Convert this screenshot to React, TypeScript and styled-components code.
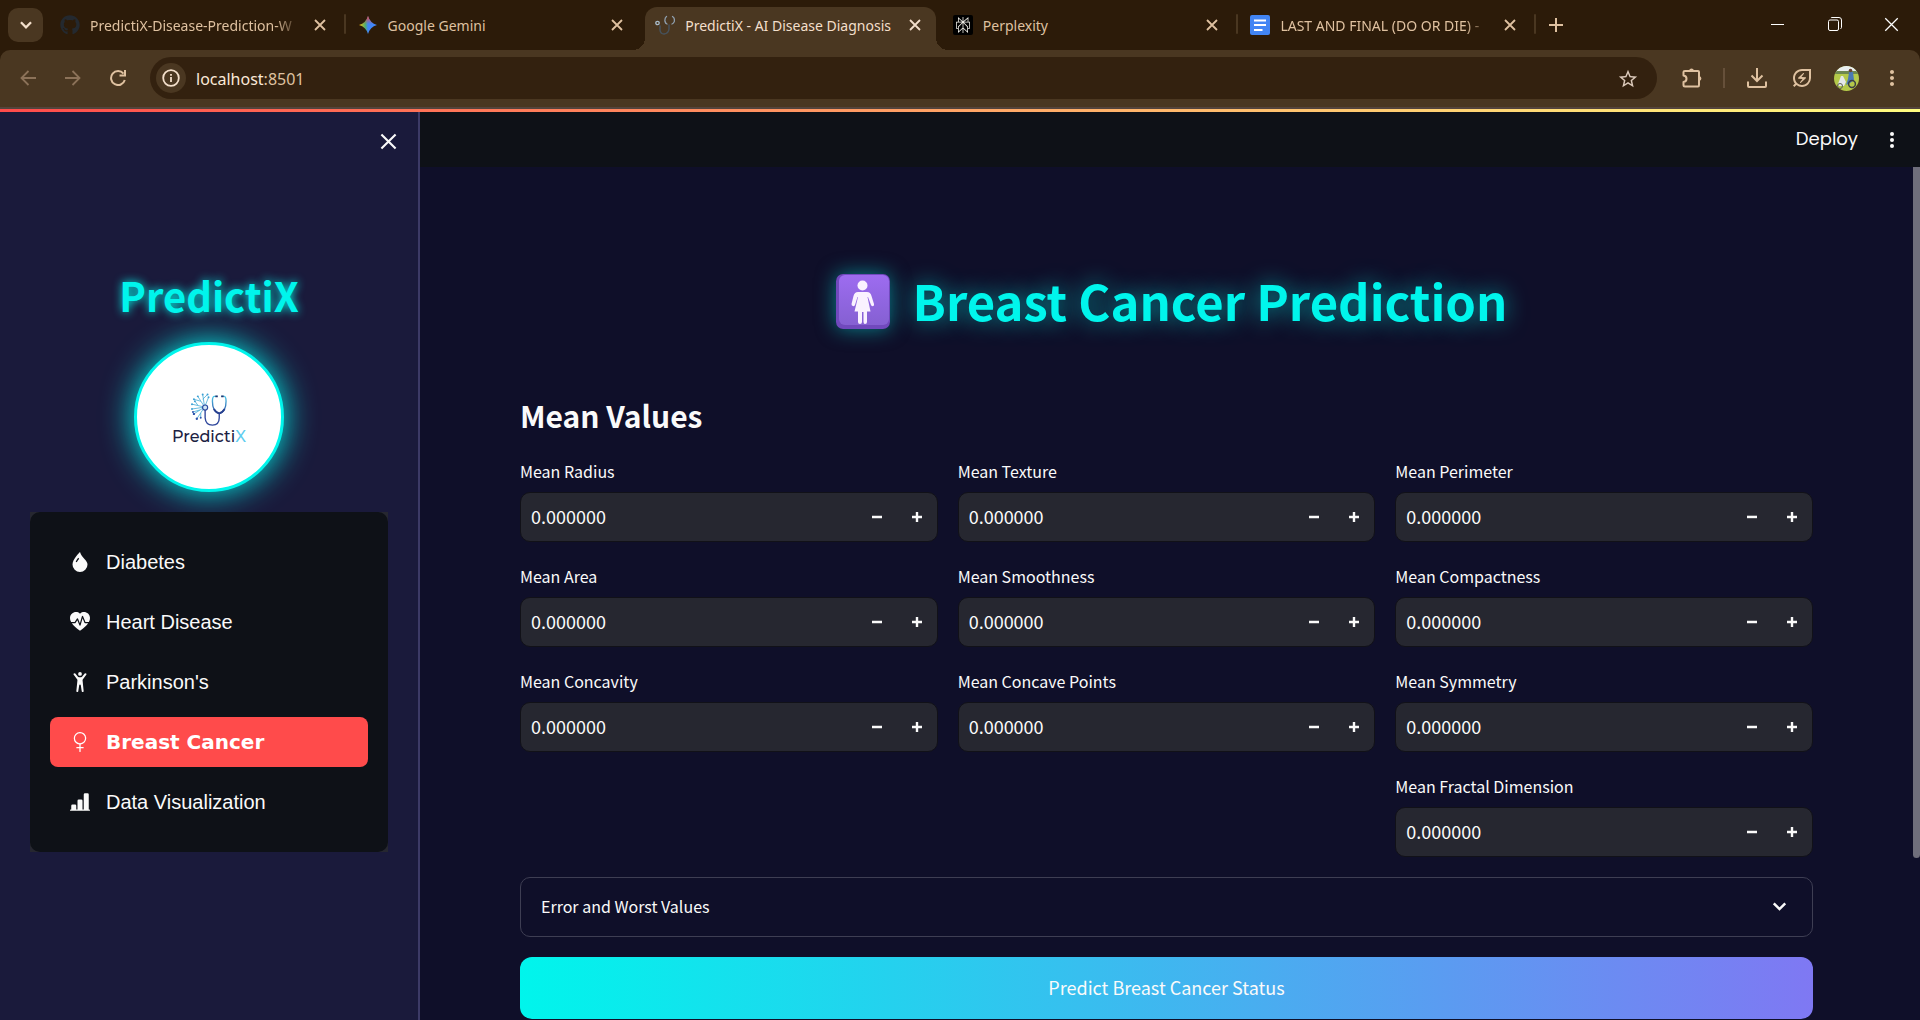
import React, { useState } from 'react';
import styled, { createGlobalStyle, css } from 'styled-components';
import {
  BsBarChartLineFill,
  BsDropletFill,
  BsGenderFemale,
  BsHeartPulseFill,
  BsPersonArmsUp,
} from 'react-icons/bs';
import { FaGithub } from 'react-icons/fa';
import { SiPerplexity } from 'react-icons/si';
import { MdMoreVert, MdOutlineEnergySavingsLeaf, MdStarOutline } from 'react-icons/md';

const sans = `"Noto Sans CJK SC", "Noto Sans", sans-serif`;
const chromeFont = `"Noto Sans", "Open Sans", sans-serif`;
const accent = '#00f5ec';

const GlobalStyle = createGlobalStyle`
  *, *::before, *::after { box-sizing: border-box; }
  body { margin: 0; background: #0f0f29; }
  h1, h2, p { margin: 0; }
  button, input { font: inherit; color: inherit; border: 0; background: none; padding: 0; margin: 0; }
  a { color: inherit; text-decoration: none; }
  svg { display: block; flex: none; }
`;

const Window = styled.div`
  height: 100vh;
  display: flex;
  flex-direction: column;
  overflow: hidden;
  color: #fafafa;
  font-family: ${sans};
`;

/* ---------- browser frame ---------- */

const TabStrip = styled.div`
  flex: none;
  height: 50px;
  display: flex;
  align-items: stretch;
  background: #2c1b09;
  color: #dfc1a0;
  font-family: ${chromeFont};
  font-size: 14px;
`;

const TabSearch = styled.button`
  flex: none;
  width: 35px;
  height: 34px;
  margin: 8px 7px 0 8px;
  border-radius: 10px;
  background: #4a3721;
  color: #f3dfcb;
  display: grid;
  place-items: center;
`;

const Tabs = styled.div`
  flex: 0 1 1488px;
  min-width: 0;
  display: flex;
`;

const Tab = styled.div<{ $active?: boolean; $divided?: boolean }>`
  position: relative;
  flex: 1 1 0;
  min-width: 0;
  display: flex;
  align-items: center;
  gap: 10px;
  height: 43px;
  margin-top: 7px;
  padding: 0 18px 7px 10px;
  ${(p) =>
    p.$divided &&
    css`
      &::after {
        content: '';
        position: absolute;
        right: 2px;
        top: 7px;
        width: 2px;
        height: 20px;
        border-radius: 1px;
        background: #4a3721;
      }
    `}
  ${(p) =>
    p.$active &&
    css`
      color: #f3dfcb;
      &::before {
        content: '';
        position: absolute;
        inset: 0 7px 0 0;
        border-radius: 12px 12px 0 0;
        background: #4a3721;
      }
    `}
`;

const TabFoot = styled.span<{ $side: 'left' | 'right' }>`
  position: absolute;
  bottom: 0;
  width: 12px;
  height: 12px;
  ${(p) => (p.$side === 'left' ? 'left: -12px;' : 'right: -5px;')}
  background: radial-gradient(
    circle at ${(p) => (p.$side === 'left' ? '0 0' : '100% 0')},
    transparent 12px,
    #4a3721 12px
  );
`;

const TabIcon = styled.span`
  position: relative;
  flex: none;
  width: 20px;
  height: 20px;
  display: grid;
  place-items: center;
`;

const TabTitle = styled.span<{ $fade?: boolean }>`
  position: relative;
  flex: 1;
  min-width: 0;
  padding-top: 1px;
  overflow: hidden;
  white-space: nowrap;
  line-height: 20px;
  ${(p) => p.$fade && 'mask-image: linear-gradient(90deg, #000 88%, transparent);'}
`;

const CloseButton = styled.button`
  position: relative;
  flex: none;
  width: 20px;
  height: 20px;
  display: grid;
  place-items: center;
`;

const NewTab = styled.button`
  width: 36px;
  display: grid;
  place-items: center;
`;

const WindowControls = styled.div`
  margin-left: auto;
  display: flex;
  color: #ffffff;
`;

const WindowButton = styled.button`
  width: 57px;
  height: 48px;
  display: grid;
  place-items: center;
`;

const ToolbarBack = styled.div`
  flex: none;
  background: #2c1b09;
`;

const Toolbar = styled.div`
  height: 59px;
  display: flex;
  align-items: center;
  padding: 0 6px 1px 5px;
  border-radius: 10px 10px 0 0;
  border-bottom: 2px solid #54443c;
  background: #4a3721;
  color: #dfc1a0;
`;

const ToolButton = styled.button<{ $dim?: boolean }>`
  flex: none;
  width: 45px;
  height: 42px;
  display: grid;
  place-items: center;
  color: ${(p) => (p.$dim ? '#8c7259' : '#dfc1a0')};
`;

const Omnibox = styled.div`
  flex: 1;
  height: 42px;
  margin: 0 12px 0 10px;
  padding: 0 20px 0 6px;
  display: flex;
  align-items: center;
  border-radius: 21px;
  background: #33210f;
`;

const SiteInfo = styled.button`
  width: 30px;
  height: 30px;
  border-radius: 15px;
  background: #4a3721;
  color: #f3dfcb;
  display: grid;
  place-items: center;
`;

const Address = styled.a`
  flex: 1;
  padding: 2px 0 0 10px;
  font-family: ${chromeFont};
  font-size: 16px;
  color: #dfc1a0;
`;

const Host = styled.span`
  color: #fbe9d8;
`;

const ToolDivider = styled.span`
  width: 2px;
  height: 20px;
  margin: 0 9px;
  background: #66503a;
`;

/* ---------- application ---------- */

const Rainbow = styled.div`
  flex: none;
  height: 3px;
  background: linear-gradient(90deg, #ff4b4b, #fffd80);
`;

const AppBody = styled.div`
  flex: 1;
  min-height: 0;
  display: flex;
`;

const Sidebar = styled.aside`
  flex: none;
  width: 420px;
  padding: 0 30px;
  border-right: 2px solid #3c3a66;
  background: #1a1a3b;
`;

const SidebarHeader = styled.div`
  height: 156px;
  padding-top: 14px;
  display: flex;
  justify-content: flex-end;
  align-items: flex-start;
`;

const CollapseButton = styled.button`
  width: 30px;
  height: 30px;
  margin-right: -15px;
  display: grid;
  place-items: center;
`;

const Brand = styled.h2`
  font-size: 40px;
  line-height: 54px;
  font-weight: 700;
  text-align: center;
  color: ${accent};
  text-shadow: 0 0 10px ${accent};
`;

const LogoDisc = styled.div`
  width: 150px;
  height: 150px;
  margin: 20px auto;
  padding-top: 6px;
  border: 3px solid ${accent};
  border-radius: 50%;
  background: #ffffff;
  box-shadow: 0 0 32px ${accent};
  display: flex;
  flex-direction: column;
  align-items: center;
  justify-content: center;
`;

const LogoText = styled.span`
  font-family: Montserrat, Inter, sans-serif;
  font-size: 16px;
  line-height: 20px;
  font-weight: 500;
  color: #1b2142;
`;

const LogoX = styled.span`
  color: #5fcdf0;
`;

const MenuFrame = styled.div`
  background: #262730;
`;

const Menu = styled.nav`
  display: flex;
  flex-direction: column;
  gap: 10px;
  padding: 25px 20px;
  border-radius: 10px;
  background: #0e1117;
`;

const MenuItem = styled.a<{ $active?: boolean }>`
  height: 50px;
  display: flex;
  align-items: center;
  gap: 16px;
  padding: 0 20px;
  border-radius: 8px;
  font-family: "Liberation Sans", Arial, sans-serif;
  font-size: 20px;
  color: #fafafa;
  ${(p) =>
    p.$active &&
    css`
      background: #ff4b4b;
      color: #ffffff;
      font-family: "Arial Black", "DejaVu Sans", sans-serif;
      font-weight: 700;
    `}
`;

const Main = styled.main`
  flex: 1;
  min-width: 0;
  display: flex;
  flex-direction: column;
  background: #0f0f29;
`;

const AppHeader = styled.header`
  flex: none;
  height: 55px;
  display: flex;
  justify-content: flex-end;
  align-items: center;
  gap: 21px;
  padding-right: 15px;
  background: #0e1117;
`;

const DeployButton = styled.button`
  padding-bottom: 2px;
  font-family: Poppins, Inter, sans-serif;
  font-size: 18px;
  line-height: 28px;
`;

const MenuDots = styled.button`
  width: 26px;
  display: grid;
  place-items: center;
`;

const Scroller = styled.div`
  flex: 1;
  min-height: 0;
  display: flex;
  overflow: hidden;
`;

const Content = styled.div`
  flex: 1;
  min-width: 0;
  padding: 100px 100px 0;
`;

const ScrollTrack = styled.div`
  flex: none;
  width: 7px;
`;

const ScrollThumb = styled.div`
  height: 81%;
  border-radius: 0 0 4px 4px;
  background: #6f6e7b;
`;

const Title = styled.h1`
  display: flex;
  justify-content: center;
  align-items: center;
  gap: 23px;
  padding-left: 10px;
  font-size: 49px;
  line-height: 66px;
  font-weight: 700;
  color: ${accent};
  text-shadow: 0 0 22px rgba(0, 245, 236, 0.6);
`;

const WomenSign = styled.span`
  width: 54px;
  height: 55px;
  margin-top: 2px;
  border-radius: 7px;
  box-shadow: 0 0 20px rgba(0, 245, 236, 0.5);
`;

const SectionTitle = styled.h2`
  margin: 61px 0 21px;
  font-size: 30px;
  line-height: 42px;
  font-weight: 700;
`;

const FieldGrid = styled.div`
  display: grid;
  grid-template-columns: repeat(3, 1fr);
  gap: 20px;
`;

const Field = styled.div<{ $last?: boolean }>`
  ${(p) => p.$last && 'grid-column: 3;'}
`;

const Label = styled.label`
  display: block;
  height: 35px;
  font-size: 16px;
  line-height: 28px;
`;

const NumberBox = styled.div`
  height: 50px;
  display: flex;
  border: 1px solid #111118;
  border-radius: 10px;
  background: #262730;
  overflow: hidden;
`;

const NumberInput = styled.input`
  flex: 1;
  min-width: 0;
  padding: 0 10px 2px;
  font-size: 18px;
  outline: none;
`;

const StepButton = styled.button`
  width: 40px;
  display: grid;
  place-items: center;
`;

const Expander = styled.button`
  width: 100%;
  height: 60px;
  margin: 20px 0;
  padding: 0 20px 2px;
  display: flex;
  align-items: center;
  justify-content: space-between;
  border: 1px solid #3e3e53;
  border-radius: 10px;
  font-size: 16px;
`;

const PredictButton = styled.button`
  display: block;
  width: 100%;
  height: 62px;
  padding-bottom: 2px;
  border-radius: 12px;
  background: linear-gradient(90deg, ${accent}, #7f78f3);
  font-size: 18px;
`;

/* ---------- drawings ---------- */

const Cross = ({ size, width }: { size: number; width: number }) => (
  <svg width={size} height={size} viewBox="0 0 12 12" fill="none" stroke="currentColor" strokeWidth={width}>
    <path d="M1 1 11 11M11 1 1 11" />
  </svg>
);

const Chevron = ({ size, width }: { size: number; width: number }) => (
  <svg width={size} height={size} viewBox="0 0 24 24" fill="none" stroke="currentColor" strokeWidth={width}>
    <path d="M6.5 9 12 14.5 17.5 9" />
  </svg>
);

const GeminiIcon = () => (
  <svg width="20" height="20" viewBox="0 0 20 20">
    <defs>
      <linearGradient id="gem" x1="0" y1="0.5" x2="1" y2="0.5">
        <stop offset="0" stopColor="#fbbc04" />
        <stop offset="0.35" stopColor="#4fae6c" />
        <stop offset="0.5" stopColor="#4285f4" />
        <stop offset="1" stopColor="#3f86ff" />
      </linearGradient>
      <linearGradient id="gemTop" x1="0" y1="0" x2="0" y2="1">
        <stop offset="0" stopColor="#f2473a" />
        <stop offset="0.45" stopColor="#f2473a" stopOpacity="0" />
      </linearGradient>
    </defs>
    <path d="M10 1Q12 8 19 10 12 12 10 19 8 12 1 10 8 8 10 1Z" fill="url(#gem)" />
    <path d="M10 1Q12 8 19 10 12 12 10 19 8 12 1 10 8 8 10 1Z" fill="url(#gemTop)" />
  </svg>
);

const StethoscopeIcon = () => (
  <svg width="20" height="20" viewBox="0 0 20 20" fill="none" strokeLinecap="round">
    <path d="M11.500 1.500Q9.500 3 10 6.500 10.500 8.500 12 9M17.500 1.500Q20 3 19.300 6.500 18.500 8.500 17 9" stroke="#8f9fae" strokeWidth="1.300" />
    <path d="M5 11V15Q5.500 19 9 19 13.500 18.500 14 14V10" stroke="#46525c" strokeWidth="1.500" />
    <circle cx="2.500" cy="8" r="1.700" stroke="#a9bccb" strokeWidth="1.300" />
  </svg>
);

const DocsIcon = () => (
  <svg width="20" height="20" viewBox="0 0 20 20">
    <rect width="20" height="20" rx="2" fill="#4285f4" />
    <path d="M4 5.500H16M4 10H16M4 15H12.500" stroke="#fff" strokeWidth="2" />
  </svg>
);

const PerplexityIcon = () => (
  <svg width="20" height="20" viewBox="0 0 20 20">
    <rect width="20" height="20" rx="2" fill="#000" />
    <g transform="translate(2 2)" color="#f4f1ea" stroke="#f4f1ea" strokeWidth="0.500">
      <SiPerplexity size={16} />
    </g>
  </svg>
);

const PuzzleIcon = () => (
  <svg width="22" height="22" viewBox="0 0 22 22" fill="none" stroke="currentColor" strokeWidth="2" strokeLinejoin="round">
    <path d="M4 4H17Q18 4 18 5V18Q18 19.500 17 19.500H4Q2.500 19.500 2.500 18V15Q5.500 14.500 5.500 11.700 5.500 9 2.500 8.500V5Q2.500 4 4 4Z" />
    <path d="M8 3.500A2.600 2.600 0 0 1 13 3.500ZM18.500 9A2.600 2.600 0 0 1 18.500 14Z" fill="currentColor" stroke="none" />
  </svg>
);

const Avatar = () => (
  <svg width="25" height="25" viewBox="0 0 25 25">
    <defs>
      <clipPath id="face">
        <circle cx="12.500" cy="12.500" r="12.500" />
      </clipPath>
    </defs>
    <g clipPath="url(#face)">
      <rect width="25" height="25" fill="#b4c94a" />
      <rect width="25" height="6" fill="#e9eef0" />
      <path d="M0 5H25V8H0Z" fill="#6d8750" />
      <path d="M4 18 7 10 9 10 12 16 10 20 5 20Z" fill="#e4e8ea" />
      <path d="M15 6H19L20 14 16 17 12 19 14 13Z" fill="#4a79b4" />
      <circle cx="16.500" cy="4.500" r="1.800" fill="#6b4634" />
      <circle cx="18" cy="18" r="3.400" fill="none" stroke="#3a3f45" strokeWidth="1.500" />
      <circle cx="6" cy="20" r="2.500" fill="none" stroke="#5a5f55" strokeWidth="1" />
    </g>
  </svg>
);

const LogoMark = () => (
  <svg width="37" height="34" viewBox="0 0 38 34" fill="none">
    <defs>
      <linearGradient id="mark" x1="0" y1="0" x2="0" y2="1">
        <stop offset="0" stopColor="#4fc6e8" />
        <stop offset="1" stopColor="#2c4aa0" />
      </linearGradient>
    </defs>
    <g stroke="#3fa9d6" strokeWidth="0.800">
      <path d="M14 14 7 3M10 8 3 6M14 14 12 1M12 6 17 1M14 14 1 11M7 12 4 8M14 14 1 16M14 14 3 21M9 17 2 19M14 14 6 26M10 20 10 25M14 14 18 4" />
    </g>
    <g fill="#3a9fd4">
      <circle cx="7" cy="3" r="1" /><circle cx="3" cy="6" r="1" /><circle cx="12" cy="1" r="1" />
      <circle cx="17" cy="1" r="1" /><circle cx="1" cy="11" r="1" /><circle cx="4" cy="8" r="1" />
      <circle cx="1" cy="16" r="1" /><circle cx="18" cy="4" r="1" />
    </g>
    <g fill="#2f55ae">
      <circle cx="3" cy="21" r="1.200" /><circle cx="2" cy="19" r="1" />
      <circle cx="6" cy="26" r="1.200" /><circle cx="10" cy="25" r="1" />
    </g>
    <circle cx="14.500" cy="14.500" r="2.600" fill="#cfe6f5" stroke="#2c4aa0" strokeWidth="1.200" />
    <path d="M14.500 17V25Q15 32.500 22 32.500 29 32.500 29 25V21" stroke="#2f479c" strokeWidth="1.400" />
    <path d="M27 3H24Q22 3 22 8 22 19 29 20.500 36 19 36 8 36 3 34 3H31" stroke="url(#mark)" strokeWidth="1.400" />
    <path d="M25 3H27.500M31 3H33.500" stroke="#24356f" strokeWidth="2" />
    <path d="M23.500 16Q26 20 29 20.500 32 20 34.500 16" stroke="#27408f" strokeWidth="1.800" />
  </svg>
);

const WomenSignDrawing = () => (
  <svg width="54" height="55" viewBox="0 0 54 55">
    <defs>
      <linearGradient id="sign" x1="0" y1="0" x2="0" y2="1">
        <stop offset="0" stopColor="#9d6cf0" />
        <stop offset="1" stopColor="#8560d2" />
      </linearGradient>
    </defs>
    <rect width="54" height="55" rx="7" fill="#7149bd" />
    <rect x="3" y="1" width="50" height="50" rx="6" fill="url(#sign)" />
    <circle cx="26.500" cy="11.500" r="5" fill="#faf2ff" />
    <path
      d="M22 18H31Q34.500 18 35.500 22L38 30Q38.500 32 37 32 35.500 32.500 35 31L32 23 31.500 23 34.500 37.500H31V48Q31 50 29 50 27.500 50 27.500 48V38H26V48Q26 50 24 50 22 50 22 48V37.500H18.500L22 23 21.500 23 19 31Q18.500 32.500 17 32 15.500 32 15.500 30L17.500 22Q18.500 18 22 18Z"
      fill="#faf2ff"
    />
  </svg>
);

/* ---------- data ---------- */

const menu = [
  { label: 'Diabetes', icon: BsDropletFill },
  { label: 'Heart Disease', icon: BsHeartPulseFill },
  { label: "Parkinson's", icon: BsPersonArmsUp },
  { label: 'Breast Cancer', icon: BsGenderFemale, active: true },
  { label: 'Data Visualization', icon: BsBarChartLineFill },
];

const fields = [
  'Mean Radius', 'Mean Texture', 'Mean Perimeter',
  'Mean Area', 'Mean Smoothness', 'Mean Compactness',
  'Mean Concavity', 'Mean Concave Points', 'Mean Symmetry',
  'Mean Fractal Dimension',
];

const tabs = [
  { title: 'PredictiX-Disease-Prediction-W', icon: <FaGithub size={20} color="#24292f" />, fade: true, divided: true },
  { title: 'Google Gemini', icon: <GeminiIcon /> },
  { title: 'PredictiX - AI Disease Diagnosis', icon: <StethoscopeIcon />, active: true },
  { title: 'Perplexity', icon: <PerplexityIcon />, divided: true },
  { title: 'LAST AND FINAL (DO OR DIE) -', icon: <DocsIcon />, fade: true, divided: true },
];

const NumberField = ({ label, last }: { label: string; last: boolean }) => {
  const [value, setValue] = useState('0.000000');
  const id = label.toLowerCase().replace(/ /g, '-');
  const step = (by: number) => setValue((v) => Math.max(0, (Number(v) || 0) + by).toFixed(6));
  return (
    <Field $last={last}>
      <Label htmlFor={id}>{label}</Label>
      <NumberBox>
        <NumberInput id={id} inputMode="decimal" value={value} onChange={(e) => setValue(e.target.value)} />
        <StepButton aria-label={`Decrease ${label}`} onClick={() => step(-0.01)}>
          <svg width="10" height="10" viewBox="0 0 10 10"><path d="M0 3.700H10V6.200H0Z" fill="currentColor" /></svg>
        </StepButton>
        <StepButton aria-label={`Increase ${label}`} onClick={() => step(0.01)}>
          <svg width="10" height="10" viewBox="0 0 10 10">
            <path d="M3.800 0H6.200V3.800H10V6.200H6.200V10H3.800V6.200H0V3.800H3.800Z" fill="currentColor" />
          </svg>
        </StepButton>
      </NumberBox>
    </Field>
  );
};

export default function App() {
  return (
    <Window>
      <GlobalStyle />
      <TabStrip>
        <TabSearch aria-label="Search tabs"><Chevron size={22} width={2.5} /></TabSearch>
        <Tabs>
          {tabs.map((t) => (
            <Tab key={t.title} $active={t.active} $divided={t.divided}>
              {t.active && <TabFoot $side="left" />}
              {t.active && <TabFoot $side="right" />}
              <TabIcon>{t.icon}</TabIcon>
              <TabTitle $fade={t.fade}>{t.title}</TabTitle>
              <CloseButton aria-label="Close tab"><Cross size={12} width={1.8} /></CloseButton>
            </Tab>
          ))}
        </Tabs>
        <NewTab aria-label="New tab">
          <svg width="14" height="14" viewBox="0 0 14 14" stroke="currentColor" strokeWidth="2"><path d="M7 0V14M0 7H14" /></svg>
        </NewTab>
        <WindowControls>
          <WindowButton aria-label="Minimize">
            <svg width="13" height="13" viewBox="0 0 13 13" stroke="currentColor"><path d="M0 6.500H13" /></svg>
          </WindowButton>
          <WindowButton aria-label="Restore">
            <svg width="14" height="14" viewBox="0 0 14 14" fill="none" stroke="currentColor">
              <rect x="0.500" y="3" width="10" height="10.500" rx="1.500" />
              <path d="M3 1Q3 0.500 4 0.500H11Q13.500 0.500 13.500 3V10.500Q13.500 11.500 12.500 11.500" />
            </svg>
          </WindowButton>
          <WindowButton aria-label="Close"><Cross size={15} width={1} /></WindowButton>
        </WindowControls>
      </TabStrip>
      <ToolbarBack>
        <Toolbar>
          <ToolButton $dim aria-label="Back">
            <svg width="16" height="16" viewBox="0 0 16 16" fill="none" stroke="currentColor" strokeWidth="1.800">
              <path d="M16 8H1.500M8.500 1 1.500 8 8.500 15" />
            </svg>
          </ToolButton>
          <ToolButton $dim aria-label="Forward">
            <svg width="16" height="16" viewBox="0 0 16 16" fill="none" stroke="currentColor" strokeWidth="1.800">
              <path d="M0 8H14.500M7.500 1 14.500 8 7.500 15" />
            </svg>
          </ToolButton>
          <ToolButton aria-label="Reload">
            <svg width="16" height="16" viewBox="0 0 16 16" fill="none" stroke="currentColor" strokeWidth="2">
              <path d="M14.800 10A7 7 0 1 1 13.500 3.600M15 0V5.500H9.500" />
            </svg>
          </ToolButton>
          <Omnibox>
            <SiteInfo aria-label="Site information">
              <svg width="18" height="18" viewBox="0 0 18 18" fill="none" stroke="currentColor" strokeWidth="1.800">
                <circle cx="9" cy="9" r="7.800" />
                <path d="M9 8V13M9 5V6.800" />
              </svg>
            </SiteInfo>
            <Address href="#"><Host>localhost</Host>:8501</Address>
            <CloseButton aria-label="Bookmark"><MdStarOutline size={22} color="#dccabb" /></CloseButton>
          </Omnibox>
          <ToolButton aria-label="Extensions"><PuzzleIcon /></ToolButton>
          <ToolDivider />
          <ToolButton aria-label="Downloads">
            <svg width="20" height="20" viewBox="0 0 20 20" fill="none" stroke="currentColor" strokeWidth="2">
              <path d="M10 0V13M4.500 7.500 10 13 15.500 7.500M1 13.500V18Q1 19 2 19H18Q19 19 19 18V13.500" />
            </svg>
          </ToolButton>
          <ToolButton aria-label="Energy saver"><MdOutlineEnergySavingsLeaf size={24} /></ToolButton>
          <ToolButton aria-label="Profile"><Avatar /></ToolButton>
          <ToolButton aria-label="Browser menu"><MdMoreVert size={24} /></ToolButton>
        </Toolbar>
      </ToolbarBack>
      <Rainbow />
      <AppBody>
        <Sidebar>
          <SidebarHeader>
            <CollapseButton aria-label="Close sidebar"><Cross size={17} width={1.5} /></CollapseButton>
          </SidebarHeader>
          <Brand>PredictiX</Brand>
          <LogoDisc>
            <LogoMark />
            <LogoText>Predicti<LogoX>X</LogoX></LogoText>
          </LogoDisc>
          <MenuFrame>
            <Menu>
              {menu.map(({ label, icon: Icon, active }) => (
                <MenuItem key={label} href="#" $active={active}>
                  <Icon size={20} />
                  {label}
                </MenuItem>
              ))}
            </Menu>
          </MenuFrame>
        </Sidebar>
        <Main>
          <AppHeader>
            <DeployButton>Deploy</DeployButton>
            <MenuDots aria-label="Main menu">
              <svg width="4" height="16" viewBox="0 0 4 16" fill="currentColor">
                <circle cx="2" cy="2" r="2" /><circle cx="2" cy="8" r="2" /><circle cx="2" cy="14" r="2" />
              </svg>
            </MenuDots>
          </AppHeader>
          <Scroller>
            <Content>
              <Title>
                <WomenSign><WomenSignDrawing /></WomenSign>
                Breast Cancer Prediction
              </Title>
              <SectionTitle>Mean Values</SectionTitle>
              <FieldGrid>
                {fields.map((label, i) => (
                  <NumberField key={label} label={label} last={i === fields.length - 1} />
                ))}
              </FieldGrid>
              <Expander aria-expanded={false}>
                Error and Worst Values
                <Chevron size={25} width={2.4} />
              </Expander>
              <PredictButton>Predict Breast Cancer Status</PredictButton>
            </Content>
            <ScrollTrack><ScrollThumb /></ScrollTrack>
          </Scroller>
        </Main>
      </AppBody>
    </Window>
  );
}
